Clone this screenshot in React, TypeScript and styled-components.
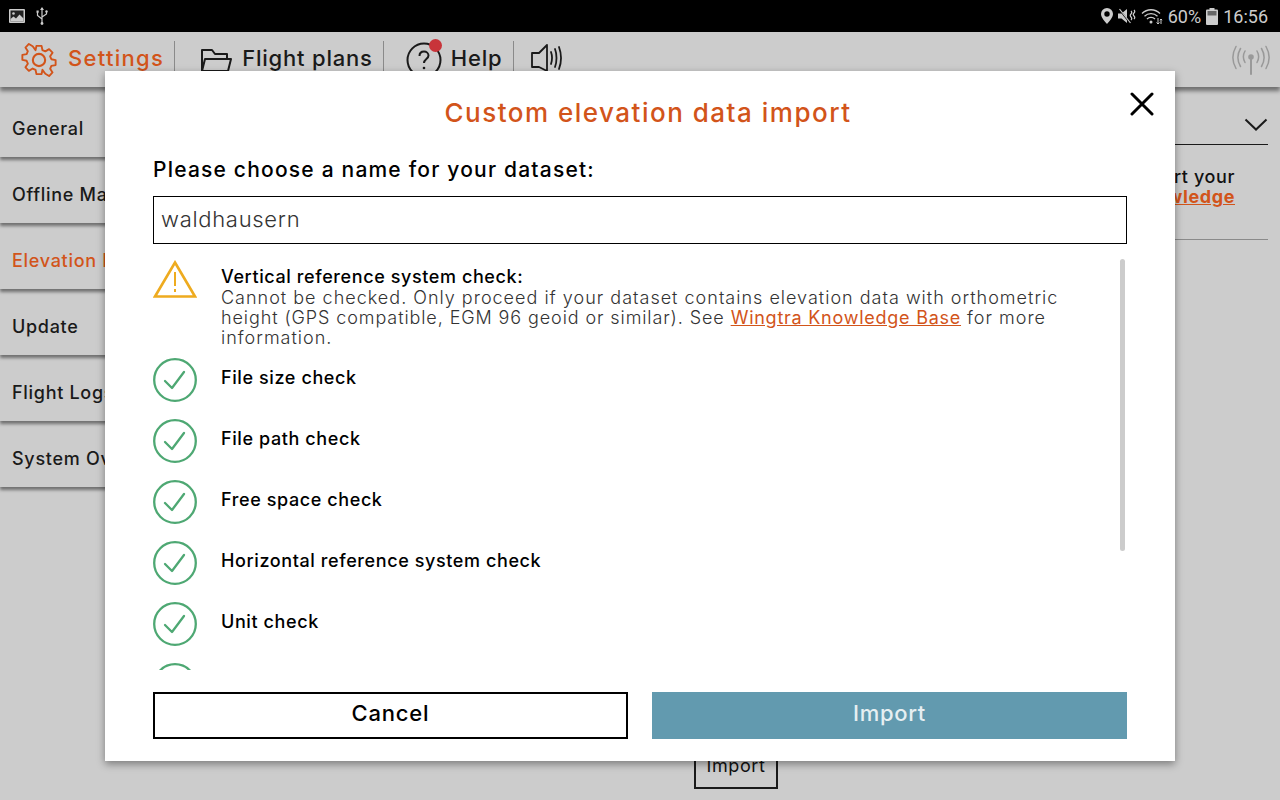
import React from 'react';
import styled, { createGlobalStyle } from 'styled-components';

const orange = '#d2541a';
const menuItems = ['General', 'Offline Maps', 'Elevation Data', 'Update', 'Flight Logs', 'System Overview'];
const checks = ['File size check', 'File path check', 'Free space check', 'Horizontal reference system check', 'Unit check'];

const GearIcon = () => (
  <svg width="38" height="36" viewBox="0 0 38 38" fill="none" stroke={orange} strokeWidth="2.2" strokeLinejoin="round">
    <circle cx="19" cy="19" r="6.5" />
    <path d="M16 2.5h6l1 5 3.4 1.5 4.4-2.7 4 4.2-2.8 4.2 1.4 3.4 5 1v5.8l-5 1-1.4 3.4 2.8 4.2-4 4.2-4.4-2.7L23 30.500l-1 5h-6l-1-5-3.400-1.500-4.400 2.700-4-4.200 2.800-4.200-1.400-3.400-5-1v-5.800l5-1 1.400-3.400-2.800-4.200 4-4.200 4.400 2.700L15 7.500z" transform="translate(1.800 1.800) scale(.905)" />
  </svg>
);

const FolderIcon = () => (
  <svg width="34" height="26" viewBox="0 0 34 26" fill="none" stroke="#1a1a1a" strokeWidth="2" strokeLinejoin="round">
    <path d="M3 24V3h10l3 4h12v5" />
    <path d="M3 24l3-12h26l-3 12z" />
  </svg>
);

const HelpIcon = () => (
  <svg width="36" height="36" viewBox="0 0 36 36" fill="none" stroke="#1a1a1a" strokeWidth="2">
    <circle cx="18" cy="18" r="16.500" />
    <path d="M13.500 14c0-3 2-4.500 4.500-4.500s4.500 1.700 4.500 4c0 3.500-4.500 3.500-4.500 7.500" />
    <circle cx="18" cy="26" r="1.300" fill="#1a1a1a" stroke="none" />
  </svg>
);

const SpeakerIcon = () => (
  <svg width="32" height="30" viewBox="0 0 32 30" fill="none" stroke="#1a1a1a" strokeWidth="1.800" strokeLinejoin="round" strokeLinecap="round">
    <path d="M1 10h7l8-8v26l-8-4H1z" />
    <path d="M20 9c1.300 3.500 1.300 8 0 12M24 6c2 5 2 13 0 18M28 4c2.400 6.500 2.400 15.500 0 22" />
  </svg>
);

const AntennaIcon = () => (
  <svg width="38" height="30" viewBox="0 0 38 30" fill="none" stroke="#999" strokeWidth="1.500" strokeLinecap="round">
    <circle cx="19" cy="12" r="2.800" fill="#999" stroke="none" />
    <path d="M19 13v16" strokeWidth="2" />
    <path d="M13 6c-2 3.500-2 8 0 11.500M25 6c2 3.500 2 8 0 11.500M8.500 3.500c-3.200 5.500-3.200 12.500 0 18M29.500 3.500c3.200 5.500 3.200 12.500 0 18M4 1.500c-4 7-4 15 0 22M34 1.500c4 7 4 15 0 22" />
  </svg>
);

const PictureIcon = () => (
  <svg width="16" height="14" viewBox="0 0 16 14">
    <rect width="16" height="14" rx="1" fill="#ccc" />
    <rect x="1.500" y="1.500" width="13" height="11" fill="#222" />
    <circle cx="4.500" cy="4.500" r="1.300" fill="#ccc" />
    <path d="M1.500 12.500V10l3-2.500 2.500 2 3.500-4 4 4v3z" fill="#ccc" />
  </svg>
);

const UsbIcon = () => (
  <svg width="12" height="18" viewBox="0 0 12 18" fill="none" stroke="#ccc" strokeWidth="1.200">
    <path d="M6 1v16M1.500 5v3.500L6 12M10.500 5v2L6 10" />
    <path d="M6 0l2 3H4z" fill="#ccc" stroke="none" />
    <rect x="0.500" y="3.500" width="2.200" height="2.200" fill="#ccc" stroke="none" />
    <circle cx="10.500" cy="4.500" r="1.200" fill="#ccc" stroke="none" />
    <circle cx="6" cy="16.500" r="1.400" fill="#ccc" stroke="none" />
  </svg>
);

const PinIcon = () => (
  <svg width="12" height="16" viewBox="0 0 12 16">
    <path fillRule="evenodd" d="M6 0a6 6 0 0 1 6 6c0 3.500-4 7.500-6 10-2-2.500-6-6.500-6-10a6 6 0 0 1 6-6zm0 3.300a2.700 2.700 0 1 0 0 5.400 2.700 2.700 0 0 0 0-5.400z" fill="#ccc" />
  </svg>
);

const MuteIcon = () => (
  <svg width="18" height="16" viewBox="0 0 18 16" fill="none">
    <path d="M0 5.500h3.500L9 1v14l-5.500-4.500H0z" fill="#ccc" />
    <path d="M1 1l11 14" stroke="#000" strokeWidth="1.500" />
    <path d="M1.500 1l11 14" stroke="#ccc" strokeWidth="1.200" />
    <path d="M13 3c1 1 1 2 0 3s-1 2 0 3 1 2 0 3M16 2c1 1 1 2 0 3s-1 2 0 3 1 2 0 3" stroke="#ccc" strokeWidth="1.200" />
  </svg>
);

const WifiIcon = () => (
  <svg width="22" height="18" viewBox="0 0 22 18" fill="none" stroke="#ccc" strokeWidth="1.300">
    <path d="M1 6.500c5-5 13-5 18 0M3.500 9.200c3.600-3.500 9.400-3.500 13 0M6 12c2.200-2.200 5.800-2.200 8 0" />
    <circle cx="10" cy="15" r="1.500" fill="#ccc" stroke="none" />
    <path d="M17 11v6M15.500 15.500L17 17l1.500-1.500M20 17v-5M18.800 13.200L20 12l1.200 1.200" strokeWidth="1" />
  </svg>
);

const BatteryIcon = () => (
  <svg width="12" height="17" viewBox="0 0 12 17">
    <rect x="3.500" width="5" height="2" fill="#ccc" />
    <rect y="1.500" width="12" height="15.500" rx="1" fill="#ccc" />
    <rect x="1.500" y="3" width="9" height="4.500" fill="#666" />
  </svg>
);

const WarningIcon = () => (
  <svg width="44" height="38" viewBox="0 0 44 38" fill="none" stroke="#eeab1f" strokeWidth="2.600" strokeLinejoin="miter">
    <path d="M22 2.500L42 36.500H2z" />
    <path d="M22 12v14M22 29v3" strokeWidth="2" />
  </svg>
);

const CheckIcon = () => (
  <svg width="44" height="44" viewBox="0 0 44 44" fill="none" stroke="#4ea873" strokeWidth="2.300">
    <circle cx="22" cy="22" r="20.800" />
    <path d="M12 23l7 7 12-16" strokeLinecap="round" strokeLinejoin="round" />
  </svg>
);

const App = () => {
  return (
    <Screen>
      <GlobalStyle />
      <StatusBar>
        <StatusGroup $gap={11}>
          <PictureIcon />
          <UsbIcon />
        </StatusGroup>
        <StatusGroup $gap={5}>
          <PinIcon />
          <MuteIcon />
          <WifiIcon />
          <StatusText>60%</StatusText>
          <BatteryIcon />
          <StatusText>16:56</StatusText>
        </StatusGroup>
      </StatusBar>
      <Toolbar>
        <ToolButton $active $gap={10}>
          <GearIcon />
          <ToolLabel $spacing={1.3}>Settings</ToolLabel>
        </ToolButton>
        <ToolDivider $left={10} $right={24} />
        <ToolButton $gap={9}>
          <FolderIcon />
          <ToolLabel $spacing={0.8}>Flight plans</ToolLabel>
        </ToolButton>
        <ToolDivider $left={10} $right={22} />
        <ToolButton $gap={9}>
          <HelpWrap>
            <HelpIcon />
            <HelpDot />
          </HelpWrap>
          <ToolLabel $spacing={0.8}>Help</ToolLabel>
        </ToolButton>
        <ToolDivider $left={11} $right={17} />
        <SpeakerButton>
          <SpeakerIcon />
        </SpeakerButton>
        <AntennaSlot>
          <AntennaIcon />
        </AntennaSlot>
      </Toolbar>
      <Body>
        <SideMenu>
          {menuItems.map((item) => (
            <MenuItem key={item} $active={item === 'Elevation Data'}>
              {item}
            </MenuItem>
          ))}
        </SideMenu>
        <Pane>
          <DropdownRow>
            <svg width="24" height="14" viewBox="0 0 24 14" fill="none" stroke="#1a1a1a" strokeWidth="2">
              <path d="M1.500 1.500L12 11.500 22.500 1.500" />
            </svg>
          </DropdownRow>
          <PaneText>
            Please import your
            <br />
            <PaneLink>Wingtra Knowledge</PaneLink>
          </PaneText>
          <PaneRule />
          <PaneImport>Import</PaneImport>
        </Pane>
      </Body>
      <Modal>
        <ModalTitle>Custom elevation data import</ModalTitle>
        <CloseButton>
          <svg width="24" height="24" viewBox="0 0 24 24" fill="none" stroke="#000" strokeWidth="3" strokeLinecap="round">
            <path d="M2 2l20 20M22 2L2 22" />
          </svg>
        </CloseButton>
        <FieldLabel>Please choose a name for your dataset:</FieldLabel>
        <NameInput defaultValue="waldhausern" />
        <CheckList>
          <Scrollbar />
          <WarningRow>
            <WarningIcon />
            <WarningBody>
              <CheckLabel>Vertical reference system check:</CheckLabel>
              <WarningText>
                Cannot be checked. Only proceed if your dataset contains elevation data with orthometric
                <br />
                <TightLine>height (GPS compatible, EGM 96 geoid or similar). See </TightLine>
                <KnowledgeLink>Wingtra Knowledge Base</KnowledgeLink> for more
                <br />
                information.
              </WarningText>
            </WarningBody>
          </WarningRow>
          {checks.map((check) => (
            <CheckRow key={check}>
              <CheckIcon />
              <CheckLabel>{check}</CheckLabel>
            </CheckRow>
          ))}
          <CheckRow>
            <CheckIcon />
          </CheckRow>
        </CheckList>
        <ButtonRow>
          <CancelButton>Cancel</CancelButton>
          <ImportButton>Import</ImportButton>
        </ButtonRow>
      </Modal>
    </Screen>
  );
};

export default App;

const GlobalStyle = createGlobalStyle`
  html, body {
    margin: 0;
    padding: 0;
    background: #cccccc;
  }
  * {
    box-sizing: border-box;
  }
`;

const Screen = styled.div`
  position: relative;
  width: 1280px;
  height: 800px;
  overflow: hidden;
  display: flex;
  flex-direction: column;
  background: #cccccc;
  font-family: Inter, 'Liberation Sans', sans-serif;
  color: #111111;
`;

const StatusBar = styled.div`
  height: 32px;
  flex-shrink: 0;
  background: #000000;
  display: flex;
  align-items: center;
  justify-content: space-between;
  padding: 0 12px 0 9px;
`;

const StatusGroup = styled.div<{ $gap: number }>`
  display: flex;
  align-items: center;
  gap: ${(p) => p.$gap}px;
`;

const StatusText = styled.span`
  font-family: Roboto, sans-serif;
  font-size: 18px;
  color: #cccccc;
`;

const Toolbar = styled.div`
  height: 55px;
  flex-shrink: 0;
  display: flex;
  align-items: center;
  padding-left: 20px;
  padding-right: 10px;
  box-shadow: 0 4px 4px rgba(0, 0, 0, 0.45);
  position: relative;
  z-index: 1;
`;

const ToolButton = styled.div<{ $active?: boolean; $gap: number }>`
  display: flex;
  align-items: center;
  gap: ${(p) => p.$gap}px;
  color: ${(p) => (p.$active ? orange : '#1a1a1a')};
`;

const ToolLabel = styled.span<{ $spacing: number }>`
  font-size: 22px;
  font-weight: 500;
  letter-spacing: ${(p) => p.$spacing}px;
  padding-bottom: 3px;
`;

const SpeakerButton = styled.div`
  display: flex;
  margin-bottom: 3px;
`;

const ToolDivider = styled.div<{ $left: number; $right: number }>`
  width: 1px;
  height: 30px;
  background: #8a8a8a;
  margin: 0 ${(p) => p.$right}px 7px ${(p) => p.$left}px;
`;

const HelpWrap = styled.div`
  position: relative;
  display: flex;
`;

const HelpDot = styled.span`
  position: absolute;
  top: -3px;
  right: 0;
  width: 13px;
  height: 13px;
  border-radius: 50%;
  background: #c8343a;
`;

const AntennaSlot = styled.div`
  margin-left: auto;
  display: flex;
`;

const Body = styled.div`
  flex: 1;
  display: flex;
`;

const SideMenu = styled.div`
  width: 170px;
  padding-top: 4px;
  display: flex;
  flex-direction: column;
`;

const MenuItem = styled.div<{ $active?: boolean }>`
  height: 66px;
  display: flex;
  align-items: center;
  padding: 8px 0 0 12px;
  font-size: 18px;
  font-weight: 500;
  letter-spacing: 0.7px;
  white-space: nowrap;
  color: ${(p) => (p.$active ? orange : '#1a1a1a')};
  box-shadow: 0 3px 3px rgba(0, 0, 0, 0.45);
`;

const Pane = styled.div`
  flex: 1;
  display: flex;
  flex-direction: column;
  padding: 0 12px 11px 0;
`;

const DropdownRow = styled.div`
  height: 58px;
  flex-shrink: 0;
  display: flex;
  align-items: flex-end;
  justify-content: flex-end;
  padding: 0 0 12px;
  border-bottom: 1px solid #1a1a1a;
`;

const PaneText = styled.div`
  margin-top: 22px;
  padding-right: 33px;
  font-size: 18px;
  line-height: 20px;
  font-weight: 500;
  letter-spacing: 0.6px;
  text-align: right;
`;

const PaneLink = styled.span`
  color: ${orange};
  font-weight: 700;
  text-decoration: underline;
`;

const PaneRule = styled.div`
  margin-top: 32px;
  height: 1px;
  background: #8a8a8a;
`;

const PaneImport = styled.div`
  margin-top: auto;
  margin-left: 524px;
  width: 84px;
  height: 48px;
  border: 2px solid #1a1a1a;
  display: flex;
  align-items: center;
  justify-content: center;
  font-size: 18px;
  letter-spacing: 0.6px;
`;

const Modal = styled.div`
  position: absolute;
  left: 105px;
  top: 71px;
  width: 1070px;
  height: 690px;
  background: #ffffff;
  padding: 27px 48px 22px;
  display: flex;
  flex-direction: column;
  color: #000000;
  box-shadow: 0 3px 8px rgba(0, 0, 0, 0.4);
  z-index: 2;
`;

const ModalTitle = styled.div`
  text-align: center;
  padding-left: 16px;
  font-size: 26px;
  line-height: 30px;
  font-weight: 500;
  letter-spacing: 1.5px;
  color: ${orange};
`;

const CloseButton = styled.div`
  position: absolute;
  top: 21px;
  right: 21px;
  display: flex;
`;

const FieldLabel = styled.div`
  margin-top: 30px;
  font-size: 21px;
  line-height: 24px;
  font-weight: 500;
  letter-spacing: 1.2px;
`;

const NameInput = styled.input`
  margin-top: 14px;
  height: 48px;
  flex-shrink: 0;
  border: 1px solid #000000;
  border-radius: 0;
  outline: none;
  padding: 0 7px 3px;
  font-family: inherit;
  font-size: 22px;
  font-weight: 300;
  letter-spacing: 0.7px;
  color: #333333;
`;

const CheckList = styled.div`
  position: relative;
  margin-top: 14px;
  height: 412px;
  flex-shrink: 0;
  overflow: hidden;
  display: flex;
  flex-direction: column;
  gap: 17px;
`;

const Scrollbar = styled.div`
  position: absolute;
  top: 1px;
  right: 2px;
  width: 5px;
  height: 292px;
  border-radius: 3px;
  background: #cccccc;
`;

const WarningRow = styled.div`
  display: flex;
  align-items: flex-start;
  gap: 24px;
  padding-top: 2px;
  height: 83px;
`;

const WarningBody = styled.div`
  padding-top: 7px;
`;

const CheckRow = styled.div`
  display: flex;
  align-items: center;
  gap: 24px;
  height: 44px;
  flex-shrink: 0;
`;

const CheckLabel = styled.div`
  font-size: 18px;
  line-height: 20px;
  font-weight: 500;
  letter-spacing: 0.6px;
  padding-bottom: 4px;
`;

const WarningText = styled.div`
  margin-top: -3px;
  font-size: 18px;
  line-height: 20px;
  font-weight: 300;
  letter-spacing: 1px;
  color: #333333;
  white-space: nowrap;
`;

const TightLine = styled.span`
  letter-spacing: 0.9px;
`;

const KnowledgeLink = styled.span`
  color: ${orange};
  font-weight: 400;
  letter-spacing: 0.75px;
  text-decoration: underline;
`;

const ButtonRow = styled.div`
  margin-top: 22px;
  display: grid;
  grid-template-columns: 1fr 1fr;
  gap: 24px;
`;

const CancelButton = styled.div`
  height: 47px;
  border: 2px solid #000000;
  display: flex;
  align-items: center;
  justify-content: center;
  padding-bottom: 5px;
  font-size: 22px;
  font-weight: 500;
  letter-spacing: 0.8px;
`;

const ImportButton = styled.div`
  height: 47px;
  background: #629aaf;
  display: flex;
  align-items: center;
  justify-content: center;
  padding-bottom: 5px;
  font-size: 22px;
  font-weight: 500;
  letter-spacing: 0.7px;
  color: #e6eff2;
`;
